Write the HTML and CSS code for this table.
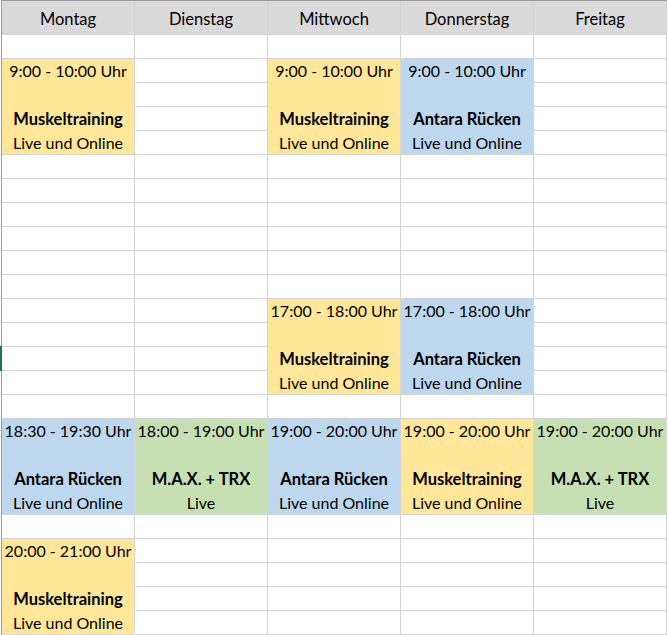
FILE: index.html
```html
<!DOCTYPE html>
<html lang="de">
<head>
<meta charset="utf-8">
<title>Kursplan</title>
<link rel="stylesheet" href="styles.css">
</head>
<body>
<div class="sheet">
  <div class="grid">
    <div class="hd">Montag</div><div class="hd">Dienstag</div><div class="hd">Mittwoch</div><div class="hd">Donnerstag</div><div class="hd">Freitag</div>

    <div class="c"></div><div class="c"></div><div class="c"></div><div class="c"></div><div class="c"></div>

    <div class="ev yellow"><span>9:00 - 10:00 Uhr</span><span></span><b>Muskeltraining</b><span>Live und Online</span></div>
    <div class="c"></div>
    <div class="ev yellow"><span>9:00 - 10:00 Uhr</span><span></span><b>Muskeltraining</b><span>Live und Online</span></div>
    <div class="ev blue"><span>9:00 - 10:00 Uhr</span><span></span><b>Antara Rücken</b><span>Live und Online</span></div>
    <div class="c"></div>
    <div class="c"></div><div class="c"></div>
    <div class="c"></div><div class="c"></div>
    <div class="c"></div><div class="c"></div>

    <div class="c"></div><div class="c"></div><div class="c"></div><div class="c"></div><div class="c"></div>
    <div class="c"></div><div class="c"></div><div class="c"></div><div class="c"></div><div class="c"></div>
    <div class="c"></div><div class="c"></div><div class="c"></div><div class="c"></div><div class="c"></div>
    <div class="c"></div><div class="c"></div><div class="c"></div><div class="c"></div><div class="c"></div>
    <div class="c"></div><div class="c"></div><div class="c"></div><div class="c"></div><div class="c"></div>
    <div class="c"></div><div class="c"></div><div class="c"></div><div class="c"></div><div class="c"></div>

    <div class="c"></div><div class="c"></div>
    <div class="ev yellow"><span>17:00 - 18:00 Uhr</span><span></span><b>Muskeltraining</b><span>Live und Online</span></div>
    <div class="ev blue"><span>17:00 - 18:00 Uhr</span><span></span><b>Antara Rücken</b><span>Live und Online</span></div>
    <div class="c"></div>
    <div class="c"></div><div class="c"></div><div class="c"></div>
    <div class="c"></div><div class="c"></div><div class="c"></div>
    <div class="c"></div><div class="c"></div><div class="c"></div>

    <div class="c"></div><div class="c"></div><div class="c"></div><div class="c"></div><div class="c"></div>

    <div class="ev blue"><span>18:30 - 19:30 Uhr</span><span></span><b>Antara Rücken</b><span>Live und Online</span></div>
    <div class="ev green"><span>18:00 - 19:00 Uhr</span><span></span><b>M.A.X. + TRX</b><span>Live</span></div>
    <div class="ev blue"><span>19:00 - 20:00 Uhr</span><span></span><b>Antara Rücken</b><span>Live und Online</span></div>
    <div class="ev yellow"><span>19:00 - 20:00 Uhr</span><span></span><b>Muskeltraining</b><span>Live und Online</span></div>
    <div class="ev green"><span>19:00 - 20:00 Uhr</span><span></span><b>M.A.X. + TRX</b><span>Live</span></div>

    <div class="c"></div><div class="c"></div><div class="c"></div><div class="c"></div><div class="c"></div>

    <div class="ev yellow"><span>20:00 - 21:00 Uhr</span><span></span><b>Muskeltraining</b><span>Live und Online</span></div>
    <div class="c"></div><div class="c"></div><div class="c"></div><div class="c"></div>
    <div class="c"></div><div class="c"></div><div class="c"></div><div class="c"></div>
    <div class="c"></div><div class="c"></div><div class="c"></div><div class="c"></div>
    <div class="c"></div><div class="c"></div><div class="c"></div><div class="c"></div>
  </div>
  <div class="row-marker"></div>
</div>
</body>
</html>
```

FILE: styles.css
```css
html, body {
  margin: 0;
  padding: 0;
  background: #ffffff;
}
body {
  font-family: "Lato", "Liberation Sans", sans-serif;
  font-size: 16px;
  color: #000;
  width: 668px;
  height: 635px;
  overflow: hidden;
}
.sheet {
  position: relative;
  margin-left: 1px;
  width: 666px;
  border-top: 1px solid #9c9c9c;
  border-left: 1px solid #9c9c9c;
  box-sizing: border-box;
}
.grid {
  display: grid;
  grid-template-columns: repeat(5, 132px);
  grid-template-rows: 33px repeat(25, 23px);
  gap: 1px;
  padding: 0 1px 1px 0;
  background: #d4d4d4;
}
.hd {
  background: #dadada;
  display: flex;
  align-items: center;
  justify-content: center;
  padding-top: 3px;
  font-size: 16.5px;
}
.c {
  background: #fff;
}
.ev {
  grid-row: span 4;
  display: grid;
  grid-template-rows: 23px 24px 24px 24px;
  align-items: center;
  justify-items: center;
  white-space: nowrap;
}
.ev > * {
  line-height: 23px;
}
.ev b {
  font-weight: 700;
  font-size: 16.5px;
  padding-top: 3px;
}
.yellow { background: #ffe699; }
.blue { background: #bdd7ee; }
.green { background: #c6e0b4; }
.row-marker {
  position: absolute;
  left: -2px;
  top: 345px;
  width: 2px;
  height: 25px;
  background: #217346;
}
```
